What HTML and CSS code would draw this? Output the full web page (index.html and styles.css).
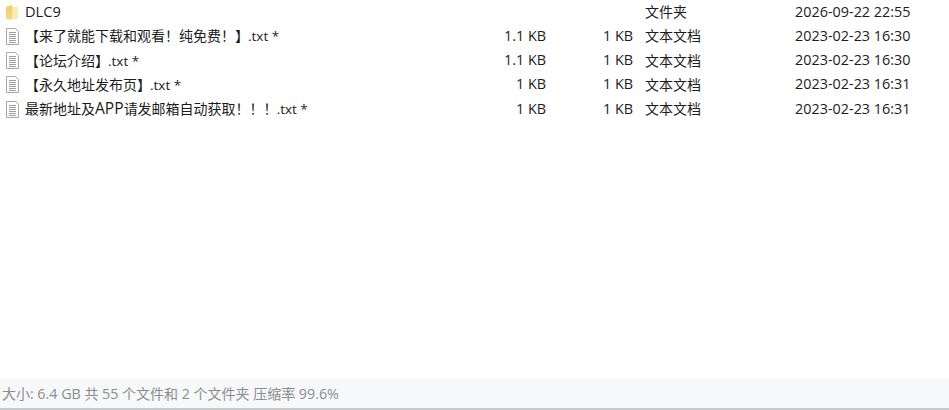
FILE: index.html
```html
<!DOCTYPE html>
<html lang="zh-CN">
<head>
    <meta charset="UTF-8">
    <title>文件列表</title>
    <link rel="stylesheet" href="styles.css">
</head>
<body>
    <svg class="sprites" width="0" height="0">
        <symbol id="textfile" viewBox="0 0 13 17">
            <path d="M.5 .5 H9.5 L12.5 3.5 V16.5 H.5 Z" fill="#fdfdfd" stroke="#a8a8a8"/>
            <path d="M3 4.5 H10 M3 6.5 H10 M3 8.5 H10 M3 10.5 H10 M3 12.5 H10 M3 14.5 H10" stroke="#a0a0a0"/>
        </symbol>
    </svg>
    <div class="list">
        <div class="row">
            <svg class="icon icon-folder" viewBox="0 0 12 16">
                <defs>
                    <linearGradient id="folder-back" x1="0" y1="0" x2="1" y2="0">
                        <stop offset="0" stop-color="#fbe5a0"/>
                        <stop offset="1" stop-color="#fdecb0"/>
                    </linearGradient>
                    <linearGradient id="folder-front" x1="0" y1="0" x2="0" y2="1">
                        <stop offset="0" stop-color="#eeca66"/>
                        <stop offset="1" stop-color="#f7dc8e"/>
                    </linearGradient>
                </defs>
                <path d="M0 2 H12 V14 H0 Z" fill="url(#folder-back)"/>
                <path d="M0 2 L6 0 V15 L0 14 Z" fill="url(#folder-front)"/>
            </svg>
            <span class="name"><span class="latin">DLC9</span></span>
            <span class="size"></span>
            <span class="packed"></span>
            <span class="type">文件夹</span>
            <span class="date">2026-09-22 22:55</span>
        </div>
        <div class="row">
            <svg class="icon"><use href="#textfile"/></svg>
            <span class="name">【来了就能下载和观看！纯免费！】<span class="ext">.txt *</span></span>
            <span class="size">1.1 KB</span>
            <span class="packed">1 KB</span>
            <span class="type">文本文档</span>
            <span class="date">2023-02-23 16:30</span>
        </div>
        <div class="row">
            <svg class="icon"><use href="#textfile"/></svg>
            <span class="name">【论坛介绍】<span class="ext">.txt *</span></span>
            <span class="size">1.1 KB</span>
            <span class="packed">1 KB</span>
            <span class="type">文本文档</span>
            <span class="date">2023-02-23 16:30</span>
        </div>
        <div class="row">
            <svg class="icon"><use href="#textfile"/></svg>
            <span class="name">【永久地址发布页】<span class="ext">.txt *</span></span>
            <span class="size">1 KB</span>
            <span class="packed">1 KB</span>
            <span class="type">文本文档</span>
            <span class="date">2023-02-23 16:31</span>
        </div>
        <div class="row">
            <svg class="icon"><use href="#textfile"/></svg>
            <span class="name">最新地址及<span class="acronym">APP</span>请发邮箱自动获取！！！<span class="ext">.txt *</span></span>
            <span class="size">1 KB</span>
            <span class="packed">1 KB</span>
            <span class="type">文本文档</span>
            <span class="date">2023-02-23 16:31</span>
        </div>
    </div>
    <div class="status">大小: <span class="latin">6.4 GB</span> 共 <span class="latin">55</span> 个文件和 <span class="latin">2</span> 个文件夹 压缩率 <span class="latin">99.6%</span></div>
</body>
</html>
```

FILE: styles.css
```css
html, body {
    height: 100%;
}

body {
    margin: 0;
    display: flex;
    flex-direction: column;
    overflow: hidden;
    background: #fff;
    color: #1c1c1c;
    font-family: "Open Sans", "Noto Sans CJK SC", sans-serif;
    font-size: 14px;
}

.sprites {
    display: none;
}

.list {
    flex: 1;
}

.row {
    display: flex;
    align-items: center;
    box-sizing: border-box;
    height: 24.25px;
    padding-bottom: 2px;
    white-space: nowrap;
}

.icon {
    width: 13px;
    height: 17px;
    margin: 2px 6px 0 6px;
    flex-shrink: 0;
}

.icon-folder {
    width: 12px;
    height: 16px;
    margin: 3px 7px 0 6px;
}

.name {
    width: 446px;
}

.latin {
    font-size: 14.6px;
}

.acronym {
    font-size: 15.6px;
}

.ext {
    font-size: 13.5px;
    margin-left: -1px;
}

.size {
    width: 75px;
    text-align: right;
    font-size: 14.4px;
}

.packed {
    width: 87px;
    text-align: right;
    font-size: 14.4px;
}

.type {
    width: 150px;
    margin-left: 12px;
}

.date {
    font-size: 14.4px;
}

.status {
    height: 31px;
    line-height: 29px;
    padding-left: 2px;
    background: #f7f8fa;
    border-bottom: 2px solid #c9c9c9;
    box-sizing: border-box;
    color: #8c8c8c;
}

.status .latin {
    font-size: 14.3px;
}
```
